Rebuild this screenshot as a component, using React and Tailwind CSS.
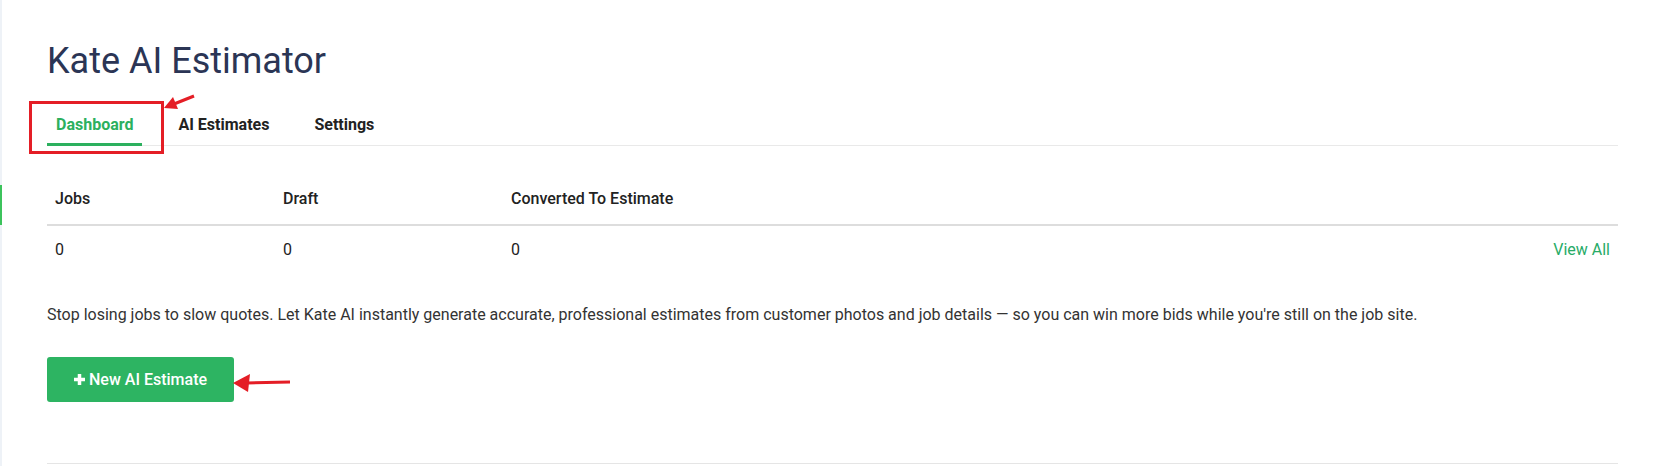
import React from "react";

const tabs = ["Dashboard", "AI Estimates", "Settings"];

const App = () => {
  return (
    <div className="flex min-h-[466px] bg-white font-['Roboto','Liberation_Sans',sans-serif]">
      {/* sidebar edge */}
      <div className="w-[2px] shrink-0 bg-[#eef2f7] pt-[185px]">
        <div className="h-[40px] w-[2px] bg-[#3cc35c]" />
      </div>

      <main className="relative flex-1 pl-[45px] pr-[43px] pt-[40px]">
        <h1 className="text-[36px] leading-[43px] font-normal text-[#2b3555]">
          Kate AI Estimator
        </h1>

        {/* Tabs */}
        <div className="relative mt-[22px] flex border-b border-[#e9e9e9]">
          {tabs.map((t, i) => (
            <div
              key={t}
              className={
                i === 0
                  ? "px-[9px] pt-[10px] pb-[8px] border-b-[3px] border-[#2cb05e] -mb-px text-[16px] leading-5 font-bold text-[#2cb05e]"
                  : "ml-[27px] px-[9px] pt-[10px] pb-[8px] border-b-[3px] border-transparent -mb-px text-[16px] leading-5 font-bold text-[#222]"
              }
            >
              {t}
            </div>
          ))}

          {/* annotation box + arrow */}
          <div className="absolute left-[-18px] top-[-4px] h-[53px] w-[135px] border-[3px] border-[#e41e26]" />
          <svg
            className="absolute left-[117px] top-[-11px]"
            width="32"
            height="18"
            viewBox="0 0 32 18"
          >
            <line x1="30" y1="2" x2="10" y2="10" stroke="#e41e26" strokeWidth="3" />
            <polygon points="0,14 9,3 14,15" fill="#e41e26" />
          </svg>
        </div>

        {/* Stats table */}
        <div className="mt-[43px] grid grid-cols-[228px_228px_1fr_auto] text-[16px] leading-5 text-[#222]">
          <div className="px-[8px] pb-[15px] font-medium border-b-2 border-[#dddddd]">Jobs</div>
          <div className="px-[8px] pb-[15px] font-medium border-b-2 border-[#dddddd]">Draft</div>
          <div className="px-[8px] pb-[15px] font-medium border-b-2 border-[#dddddd]">
            Converted To Estimate
          </div>
          <div className="px-[8px] pb-[15px] border-b-2 border-[#dddddd]" />
          <div className="px-[8px] pt-[14px] pb-[12px]">0</div>
          <div className="px-[8px] pt-[14px] pb-[12px]">0</div>
          <div className="px-[8px] pt-[14px] pb-[12px]">0</div>
          <div className="px-[8px] pt-[14px] pb-[12px] text-right text-[#27ab67]">View All</div>
        </div>

        <p className="mt-[31px] text-[16px] leading-6 text-[#333]">
          Stop losing jobs to slow quotes. Let Kate AI instantly generate accurate, professional
          estimates from customer photos and job details — so you can win more bids while you're
          still on the job site.
        </p>

        <div className="relative mt-[30px] flex items-center">
          <button className="flex h-[45px] items-center gap-[4px] rounded-[3px] bg-[#2db462] px-[27px] text-[16px] font-medium text-white">
            <svg width="11" height="11" viewBox="0 0 11 11">
              <rect x="3.75" y="0" width="3.5" height="11" fill="#fff" />
              <rect x="0" y="3.75" width="11" height="3.5" fill="#fff" />
            </svg>
            New AI Estimate
          </button>
          <svg width="58" height="20" viewBox="0 0 58 20" className="ml-[-1px] mt-[6px]">
            <line x1="14" y1="10" x2="57" y2="9" stroke="#e41e26" strokeWidth="3" />
            <polygon points="0,10 17,1 15,19" fill="#e41e26" />
          </svg>
        </div>

        <div className="mt-[61px] border-t border-[#e5e5e5]" />
      </main>
    </div>
  );
};

export default App;
